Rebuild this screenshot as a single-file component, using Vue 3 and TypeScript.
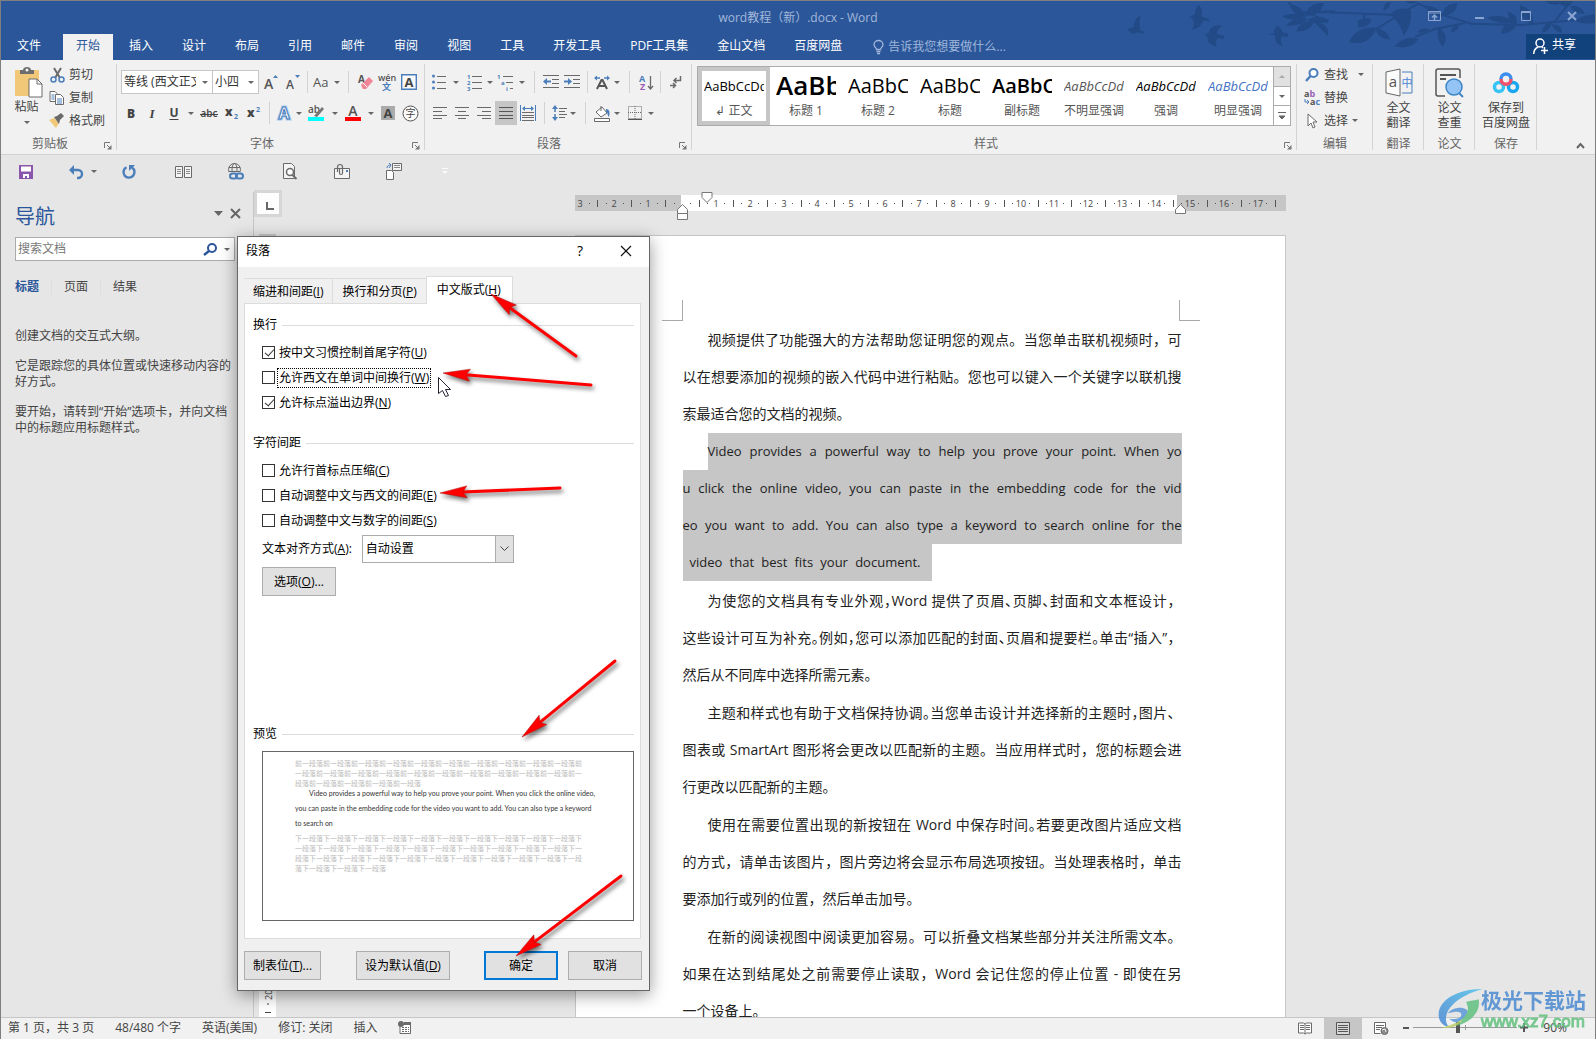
<script setup lang="ts">
import { ref } from 'vue'

interface Icon { w: number; h: number; body: string }
interface Tool { kind: 'btn' | 'arr' | 'sep'; icon?: string; label?: string; on?: boolean }
interface Line { t: string; tight?: boolean; end?: boolean }

const G = '#6a6a6a'
const B = '#4a7ebb'

const icons: Record<string, Icon> = {
  paste: { w: 28, h: 31, body: `<path d="M0 3h24v26H0z" fill="#f0c878"/><path d="M5 3h3c0-4 8-4 8 0h3v4H5z" fill="#6d6d6d"/><circle cx="12" cy="3" r="1.5" fill="#f0f0f0"/><path d="M14 12h8l5 5v13H14z" fill="#fff" stroke="#6d6d6d"/><path d="M22 12v5h5" fill="none" stroke="#6d6d6d"/>` },
  cut: { w: 15, h: 16, body: `<path d="M4 1l6 10M11 1L5 11" stroke="#6a6a6a" stroke-width="2" fill="none"/><circle cx="3.500" cy="12.500" r="2.500" fill="none" stroke="${B}" stroke-width="1.500"/><circle cx="11.500" cy="12.500" r="2.500" fill="none" stroke="${B}" stroke-width="1.500"/>` },
  copy: { w: 16, h: 14, body: `<path d="M1 .5h5l2 2v8H1z" fill="#fff" stroke="${G}"/><path d="M6.500 3.500h5l3 3v7h-8z" fill="#fff" stroke="${G}"/><path d="M8 8h5M8 10h5M8 12h5M2.500 4h3M2.500 6h3M2.500 8h3" stroke="${B}"/>` },
  brush: { w: 16, h: 15, body: `<path d="M0 7l5-2 5 5-3 5z" fill="#f0c878"/><path d="M5 4l3-1 4-3 3 3-4 4-1 4z" fill="#6a6a6a"/>` },
  grow: { w: 14, h: 16, body: `<text x="0" y="15" font-size="14" fill="#555" font-weight="600">A</text><path d="M9 4l2.500-3L14 4z" fill="${B}"/>` },
  shrink: { w: 14, h: 16, body: `<text x="0" y="15" font-size="12" fill="#555" font-weight="600">A</text><path d="M9 1l2.500 3L14 1z" fill="${B}"/>` },
  aa: { w: 18, h: 14, body: `<text x="0" y="12" font-size="13" fill="#555" font-weight="500">Aa</text>` },
  eraser: { w: 15, h: 16, body: `<text x="0" y="9" font-size="10" fill="#555" font-weight="700">A</text><path d="M3 11l8-8 4 4-7 8H5z" fill="#ef8595"/><path d="M5 9l4 4" stroke="#fff"/>` },
  wen: { w: 18, h: 17, body: `<text x="0" y="7" font-size="9" fill="#555" font-weight="600">wén</text><text x="4" y="16" font-size="9" fill="${B}" font-weight="700">文</text>` },
  boxa: { w: 16, h: 16, body: `<path d="M.7 .7h14.600v14.600H.7z" fill="#f8f8f8" stroke="${B}" stroke-width="1.400"/><text x="8" y="13" text-anchor="middle" font-size="13" fill="#444" font-weight="700">A</text>` },
  bold: { w: 10, h: 14, body: `<text x="5" y="12" text-anchor="middle" font-size="12" fill="#444" font-weight="800">B</text>` },
  italic: { w: 10, h: 14, body: `<text x="5" y="12" text-anchor="middle" font-size="13" fill="#444" font-style="italic" font-weight="700" font-family="Liberation Serif">I</text>` },
  under: { w: 12, h: 14, body: `<text x="6" y="11" text-anchor="middle" font-size="12" fill="#444" font-weight="700">U</text><path d="M1.500 13.500h9" stroke="#444"/>` },
  strike: { w: 18, h: 12, body: `<text x="9" y="10" text-anchor="middle" font-size="10" fill="#444" font-weight="600">abc</text><path d="M0 7.500h18" stroke="#444"/>` },
  sub: { w: 14, h: 14, body: `<text x="0" y="10" font-size="12" fill="#444" font-weight="800">x</text><text x="9" y="13" font-size="7" fill="${B}" font-weight="700">2</text>` },
  sup: { w: 14, h: 14, body: `<text x="0" y="11" font-size="12" fill="#444" font-weight="800">x</text><text x="9" y="6" font-size="7" fill="${B}" font-weight="700">2</text>` },
  effect: { w: 16, h: 16, body: `<text x="8" y="14" text-anchor="middle" font-size="16" fill="#fff" stroke="#a9cdf0" stroke-width="3" font-weight="700">A</text><text x="8" y="14" text-anchor="middle" font-size="16" fill="#fff" stroke="#3f77b8" font-weight="700">A</text>` },
  marker: { w: 18, h: 18, body: `<text x="0" y="9" font-size="10" fill="#555" font-weight="600">ab</text><path d="M6 12l8-9 2 2-7 8z" fill="#777"/><path d="M0 13h16v4H0z" fill="#00ffff"/>` },
  acolor: { w: 16, h: 18, body: `<text x="8" y="12" text-anchor="middle" font-size="14" fill="#555" font-weight="600">A</text><path d="M0 13h16v4H0z" fill="#ff0000"/>` },
  ashade: { w: 14, h: 14, body: `<path d="M0 0h14v14H0z" fill="#ababab"/><text x="7" y="12" text-anchor="middle" font-size="13" fill="#444" font-weight="700">A</text>` },
  circlez: { w: 17, h: 17, body: `<circle cx="8.500" cy="8.500" r="7.500" fill="#fafafa" stroke="#555"/><text x="8.500" y="12" text-anchor="middle" font-size="10" fill="#444">字</text>` },
  bullets: { w: 14, h: 16, body: `<g fill="${B}"><circle cx="1.500" cy="2" r="1.500"/><circle cx="1.500" cy="8" r="1.500"/><circle cx="1.500" cy="14" r="1.500"/></g><path d="M5 2.500h9M5 8.500h9M5 14.500h9" stroke="${G}"/>` },
  numbers: { w: 15, h: 17, body: `<g fill="${B}" font-size="6" font-weight="700"><text x="0" y="5">1</text><text x="0" y="11">2</text><text x="0" y="17">3</text></g><path d="M5 2.500h10M5 8.500h10M5 14.500h10" stroke="${G}"/>` },
  multi: { w: 18, h: 17, body: `<g fill="${B}" font-size="6" font-weight="700"><text x="0" y="5">1</text><text x="4" y="11">a</text><text x="9" y="17">i</text></g><path d="M6 2.500h10M9 8.500h7M13 14.500h3" stroke="${G}"/>` },
  outdent: { w: 17, h: 14, body: `<path d="M0 .5h16M9 4.500h7M9 8.500h7M0 12.500h16" stroke="${G}"/><path d="M8 6.500H3" stroke="${B}" stroke-width="2"/><path d="M0 6.500L4 3v7z" fill="${B}"/>` },
  indent: { w: 17, h: 14, body: `<path d="M0 .5h16M9 4.500h7M9 8.500h7M0 12.500h16" stroke="${G}"/><path d="M0 6.500h5" stroke="${B}" stroke-width="2"/><path d="M8 6.500L4 3v7z" fill="${B}"/>` },
  awide: { w: 16, h: 15, body: `<path d="M3 14L7.500 5h1L13 14M5 11h6" fill="none" stroke="#555" stroke-width="2"/><path d="M0 3L3 .5v5zM16 3L13 .5v5z" fill="${B}"/><path d="M2 3h4M10 3h4" stroke="${B}" stroke-width="1.500"/>` },
  sort: { w: 15, h: 17, body: `<text x="0" y="8" font-size="9" fill="${B}" font-weight="700">A</text><text x="1" y="16" font-size="9" fill="#9a5fb5" font-weight="700">Z</text><path d="M11.500 2v13M9 12l2.500 3 2.500-3" stroke="${G}" fill="none" stroke-width="1.300"/>` },
  marks: { w: 12, h: 14, body: `<path d="M10.500 1v4.500H4M6.500 3L4 5.500 6.500 8M0 10.500h5M3 8l2.500 2.500L3 13" stroke="${G}" fill="none" stroke-width="1.500"/>` },
  left: { w: 14, h: 12, body: `<path d="M0 .5h14M0 4.500h9M0 8.500h14M0 11.500h9" stroke="${G}"/>` },
  center: { w: 14, h: 12, body: `<path d="M0 .5h14M3 4.500h8M0 8.500h14M3 11.500h8" stroke="${G}"/>` },
  right: { w: 14, h: 12, body: `<path d="M0 .5h14M5 4.500h9M0 8.500h14M5 11.500h9" stroke="${G}"/>` },
  justify: { w: 14, h: 12, body: `<path d="M0 .5h14M0 4.500h14M0 8.500h14M0 11.500h14" stroke="#555"/>` },
  dist: { w: 16, h: 16, body: `<path d="M.5 0v16M15.500 0v16" stroke="${B}"/><path d="M2 3.500L5 1v5zM14 3.500L11 1v5z" fill="${B}"/><path d="M4 3.500h8" stroke="${B}"/><path d="M2 7.500h12M2 10.500h12M2 12.500h12M2 15.500h12" stroke="${G}"/>` },
  spacing: { w: 15, h: 16, body: `<path d="M3 2v5M3 9v5" stroke="${B}" stroke-width="1.500"/><path d="M0 4l3-4 3 4zM0 12l3 4 3-4z" fill="${B}"/><path d="M7 3.500h8M7 6.500h6M7 9.500h8M7 12.500h6" stroke="${G}"/>` },
  bucket: { w: 17, h: 17, body: `<path d="M2 7l6-5 5 6-6 4z" fill="#fff" stroke="${G}"/><path d="M7 6V1" stroke="${G}"/><path d="M12 4c4 0 4 4 3 8-2-2-1-5-3-5z" fill="${B}"/><path d="M.5 13.500h15v3H.5z" fill="#fff" stroke="${G}"/>` },
  borders: { w: 14, h: 14, body: `<path d="M.5 .5h13v12H.5zM7 0v13M0 6.500h14" fill="none" stroke="${G}" stroke-dasharray="1 1"/><path d="M0 13.500h14" stroke="#555"/>` },
  find: { w: 14, h: 14, body: `<circle cx="8.500" cy="5" r="4" fill="#fff" stroke="${B}" stroke-width="2"/><path d="M5.500 8L1 13" stroke="${B}" stroke-width="2.500"/>` },
  replace: { w: 17, h: 17, body: `<text x="0" y="8" font-size="9" font-weight="700" fill="#555">a<tspan fill="#9a5fb5">b</tspan></text><text x="6" y="16" font-size="9" font-weight="700" fill="#555">a<tspan fill="${B}">c</tspan></text><path d="M1 10v3h4M3 11l2 2-2 2" stroke="${B}" fill="none"/>` },
  select: { w: 12, h: 16, body: `<path d="M2 1v12l3-3 2 5 2-1-2-5h4z" fill="#fff" stroke="${G}"/>` },
  translate: { w: 28, h: 29, body: `<path d="M1 4l14-3v27L1 25z" fill="#fbfbfb" stroke="#666"/><text x="8" y="19" text-anchor="middle" font-size="15" fill="#555">a</text><path d="M17 4h10v21H17" fill="none" stroke="${B}"/><text x="22" y="19" text-anchor="middle" font-size="11" fill="#4a86d8">中</text>` },
  paper: { w: 29, h: 30, body: `<path d="M25 10V3q0-2-2-2H3Q1 1 1 3v23q0 2 2 2h7" fill="none" stroke="#555" stroke-width="1.500"/><path d="M5 7h16M5 11h6" stroke="#555" stroke-width="2"/><circle cx="19" cy="19" r="8" fill="#93c4f5" stroke="#3f86c6" stroke-width="1.500"/><path d="M24 25l4 4" stroke="#3f86c6" stroke-width="2"/>` },
  netdisk: { w: 26, h: 22, body: `<circle cx="6" cy="15" r="4.500" fill="none" stroke="#36c3f5" stroke-width="3.500"/><circle cx="20" cy="15" r="4.500" fill="none" stroke="#17a6ef" stroke-width="3.500"/><path d="M8 7a5 5 0 0 1 10 0" fill="none" stroke="#3b8df0" stroke-width="3.500"/><path d="M8 7c0 7 10 7 10 0" fill="none" stroke="#f2506b" stroke-width="3.500"/>` },
  save: { w: 14, h: 14, body: `<path d="M0 0h14v14H0z" fill="#8a55ab"/><path d="M2 1.500h10v5H2zM4 9h6v4H8v-2H6v2H4z" fill="#fff"/>` },
  undo: { w: 15, h: 14, body: `<path d="M2 5h7a4 4 0 0 1 0 8H8" fill="none" stroke="${B}" stroke-width="2.400"/><path d="M0 5l5-5v10z" fill="${B}"/>` },
  redo: { w: 14, h: 14, body: `<path d="M4.500 2.200A5.500 5.500 0 1 0 10 2.500" fill="none" stroke="${B}" stroke-width="2.400"/><path d="M7 0h6L7 6z" fill="${B}"/>` },
  columns: { w: 17, h: 12, body: `<path d="M.5 .5h7v11h-7zM9.500 .5h7v11h-7z" fill="#f4f4f4" stroke="${G}"/><path d="M2 3.500h4M2 5.500h4M2 7.500h4M11 3.500h4M11 5.500h4M11 7.500h4" stroke="#888"/>` },
  globe: { w: 16, h: 17, body: `<g fill="none" stroke="${G}"><circle cx="6.500" cy="6.500" r="6"/><ellipse cx="6.500" cy="6.500" rx="2.500" ry="6"/><path d="M1 4.500h11M1 8.500h11"/></g><path d="M1 9h15v8H1z" fill="#e6e6e6"/><rect x="2" y="10.500" width="7" height="5" rx="2.500" fill="none" stroke="${B}" stroke-width="2"/><rect x="8" y="10.500" width="7" height="5" rx="2.500" fill="none" stroke="${B}" stroke-width="2"/>` },
  preview: { w: 14, h: 17, body: `<path d="M.5 .5h8l3 3v12H.5z" fill="#f4f4f4" stroke="${G}"/><circle cx="7" cy="9" r="3.500" fill="#fff" stroke="${G}" stroke-width="1.500"/><path d="M9.500 12l4 4" stroke="${G}" stroke-width="2"/>` },
  attach: { w: 17, h: 16, body: `<path d="M.5 4.500h15v10H.5z" fill="#f4f4f4" stroke="${G}"/><path d="M12 6h2v2h-2z" fill="${B}"/><path d="M3.500 8V3a2.500 2.500 0 0 1 5 0v6a1.500 1.500 0 0 1-3 0V4" fill="none" stroke="${G}" stroke-width="1.200"/>` },
  transfer: { w: 16, h: 17, body: `<path d="M6.500 .5h9v7h-9z" fill="#f4f4f4" stroke="${G}"/><path d="M8 2.500h6M8 4.500h6" stroke="#888"/><path d="M.5 7.500h5l2 2v7h-7z" fill="#fff" stroke="${G}"/><path d="M1 5c0-3 3-3 4-3M3 0l2 2-2 3" fill="none" stroke="${B}"/>` },
  readview: { w: 14, h: 13, body: `<path d="M.5 1h5l1.500 1 1.500-1h5v10h-5L7 12l-1.500-1h-5zM7 2v10" fill="#fff" stroke="${G}"/><path d="M2 3.500h4M2 5.500h4M2 7.500h4M8 3.500h4M8 5.500h4M8 7.500h4" stroke="${G}"/>` },
  printview: { w: 14, h: 13, body: `<path d="M.5 .5h13v12H.5z" fill="#d8d8d8" stroke="#555"/><path d="M2 3.500h10M2 5.500h10M2 7.500h10M2 9.500h10" stroke="#555"/>` },
  webview: { w: 15, h: 13, body: `<path d="M11.500 5V.5H.5v11h6" fill="#fff" stroke="${G}"/><path d="M2 3.500h8M2 5.500h6M2 7.500h4" stroke="${G}"/><circle cx="10.500" cy="9" r="3.500" fill="#8a8a8a" stroke="${G}"/><path d="M8 8l3-1 1 3" stroke="#eee" fill="none"/>` },
  macro: { w: 13, h: 13, body: `<path d="M2 3.500h10.500v9H2z" fill="#fff" stroke="${G}"/><path d="M6 1h7v3H6z" fill="${G}"/><circle cx="3" cy="3" r="3" fill="${G}"/><path d="M4 6.500h7M4 8.500h7M4 10.500h7" stroke="${G}" stroke-dasharray="2 1"/>` },
  launch: { w: 8, h: 8, body: `<path d="M.5 6V.5H6" fill="none" stroke="#777"/><path d="M3 3l3 3" stroke="#777"/><path d="M7.500 3v4.500H3z" fill="#777"/>` },
  arrow: { w: 6, h: 3, body: `<path d="M0 0h6L3 3z" fill="#666"/>` },
  person: { w: 15, h: 17, body: `<circle cx="7" cy="5" r="4" fill="none" stroke="#fff" stroke-width="1.500"/><path d="M.7 16c0-4 2-6 4.500-7M9 9l1 1" fill="none" stroke="#fff" stroke-width="1.500"/><path d="M11.500 9v7M8 12.500h7" stroke="#fff" stroke-width="1.500"/>` },
  bulb: { w: 11, h: 14, body: `<path d="M3.500 9.500C3.500 8 1 7 1 4.500a4.500 4 0 0 1 9 0C10 7 7.500 8 7.500 9.500zM3.500 11.500h4M4 13.500h3" fill="none" stroke="#9fb6da" stroke-width="1.300"/>` },
  ribbonopt: { w: 13, h: 10, body: `<path d="M.5 .5h12v9H.5zM0 2h13" fill="none" stroke="#8aa5cf"/><path d="M6.500 9V4M4 6.500L6.500 4 9 6.500" fill="none" stroke="#8aa5cf" stroke-width="1.500"/>` },
  minimize: { w: 10, h: 10, body: `<path d="M0 7h9" stroke="#8aa5cf" stroke-width="2"/>` },
  maximize: { w: 10, h: 10, body: `<path d="M.5 .5h9v9h-9zM0 1.500h10" fill="none" stroke="#8aa5cf"/>` },
  close: { w: 10, h: 10, body: `<path d="M1 1l8 8M9 1L1 9" stroke="#8aa5cf" stroke-width="2"/>` },
}

const menuTabs = ['文件', '开始', '插入', '设计', '布局', '引用', '邮件', '审阅', '视图', '工具', '开发工具', 'PDF工具集', '金山文档', '百度网盘']
const winButtons = [
  { icon: 'ribbonopt', label: '功能区显示选项' },
  { icon: 'minimize', label: '最小化' },
  { icon: 'maximize', label: '最大化' },
  { icon: 'close', label: '关闭' },
]

const btn = (icon: string, label: string, on = false): Tool => ({ kind: 'btn', icon, label, on })
const arr: Tool = { kind: 'arr' }
const sep: Tool = { kind: 'sep' }

const fontRow1 = [btn('grow', '增大字号'), btn('shrink', '减小字号'), sep, btn('aa', '更改大小写'), arr, sep, btn('eraser', '清除格式'), btn('wen', '拼音指南'), btn('boxa', '字符边框')]
const fontRow2 = [btn('bold', '加粗'), btn('italic', '倾斜'), btn('under', '下划线'), arr, btn('strike', '删除线'), btn('sub', '下标'), btn('sup', '上标'), sep, btn('effect', '文本效果'), arr, btn('marker', '突出显示'), arr, btn('acolor', '字体颜色'), arr, btn('ashade', '字符底纹'), btn('circlez', '带圈字符')]
const paraRow1 = [btn('bullets', '项目符号'), arr, btn('numbers', '编号'), arr, btn('multi', '多级列表'), arr, sep, btn('outdent', '减少缩进'), btn('indent', '增加缩进'), sep, btn('awide', '中文版式'), arr, sep, btn('sort', '排序'), sep, btn('marks', '显示编辑标记')]
const paraRow2 = [btn('left', '左对齐'), btn('center', '居中'), btn('right', '右对齐'), btn('justify', '两端对齐', true), btn('dist', '分散对齐'), sep, btn('spacing', '行距'), arr, sep, btn('bucket', '底纹'), arr, btn('borders', '边框'), arr]
const quick = [btn('save', '保存'), btn('undo', '撤消'), arr, btn('redo', '重复'), btn('columns', '多页'), btn('globe', '超链接'), btn('preview', '打印预览'), btn('attach', '附件'), btn('transfer', '导出')]

const clipboard = [
  { icon: 'cut', label: '剪切' },
  { icon: 'copy', label: '复制' },
  { icon: 'brush', label: '格式刷' },
]
const editing = [
  { icon: 'find', label: '查找', arrow: 'far' },
  { icon: 'replace', label: '替换', arrow: '' },
  { icon: 'select', label: '选择', arrow: 'near' },
]
const styles = [
  { sample: 'AaBbCcDd', name: '↲ 正文', look: 'body' },
  { sample: 'AaBb', name: '标题 1', look: 'h1' },
  { sample: 'AaBbC', name: '标题 2', look: 'h2' },
  { sample: 'AaBbC', name: '标题', look: 'h2' },
  { sample: 'AaBbC', name: '副标题', look: 'h2 heavy' },
  { sample: 'AaBbCcDd', name: '不明显强调', look: 'body slant grey' },
  { sample: 'AaBbCcDd', name: '强调', look: 'body slant' },
  { sample: 'AaBbCcDd', name: '明显强调', look: 'body slant blue' },
]
const bigTools = [
  { icon: 'translate', lines: ['全文', '翻译'], group: '翻译', size: 'n1' },
  { icon: 'paper', lines: ['论文', '查重'], group: '论文', size: 'n1' },
  { icon: 'netdisk', lines: ['保存到', '百度网盘'], group: '保存', size: 'n2' },
]

/* A4 page: 21 cm of ruler over the page width, margins at 3.2 cm */
const pageWidth = 711
const cm = (n: number) => Math.round(107 + (n * pageWidth) / 21)
const numbers = [-3, -2, -1, ...Array.from({ length: 17 }, (_, i) => i + 1)]
const halves = Array.from({ length: 21 }, (_, i) => i - 3 + 0.5)
const quarters = Array.from({ length: 41 }, (_, i) => -2.75 + i / 2)

const selection: Line[] = [
  { t: 'Video provides a powerful way to help you prove your point. When yo' },
  { t: 'u click the online video, you can paste in the embedding code for the vid' },
  { t: 'eo you want to add. You can also type a keyword to search online for the' },
  { t: 'video that best fits your document.' },
]
const before: Line[][] = [[
  { t: '视频提供了功能强大的方法帮助您证明您的观点。当您单击联机视频时，可' },
  { t: '以在想要添加的视频的嵌入代码中进行粘贴。您也可以键入一个关键字以联机搜' },
  { t: '索最适合您的文档的视频。', end: true },
]]
const after: Line[][] = [
  [
    { t: '为使您的文档具有专业外观，Word 提供了页眉、页脚、封面和文本框设计，', tight: true },
    { t: '这些设计可互为补充。例如，您可以添加匹配的封面、页眉和提要栏。单击“插入”，', tight: true },
    { t: '然后从不同库中选择所需元素。', end: true },
  ],
  [
    { t: '主题和样式也有助于文档保持协调。当您单击设计并选择新的主题时，图片、', tight: true },
    { t: '图表或 SmartArt 图形将会更改以匹配新的主题。当应用样式时，您的标题会进' },
    { t: '行更改以匹配新的主题。', end: true },
  ],
  [
    { t: '使用在需要位置出现的新按钮在 Word 中保存时间。若要更改图片适应文档', tight: true },
    { t: '的方式，请单击该图片，图片旁边将会显示布局选项按钮。当处理表格时，单击' },
    { t: '要添加行或列的位置，然后单击加号。', end: true },
  ],
  [
    { t: '在新的阅读视图中阅读更加容易。可以折叠文档某些部分并关注所需文本。' },
    { t: '如果在达到结尾处之前需要停止读取，Word 会记住您的停止位置 - 即使在另' },
    { t: '一个设备上。', end: true },
  ],
]

const dialogTabs = [
  { text: '缩进和间距', key: 'I' },
  { text: '换行和分页', key: 'P' },
  { text: '中文版式', key: 'H' },
]
const activeTab = ref(2)
const breakOptions = ref([
  { text: '按中文习惯控制首尾字符', key: 'U', on: true, focus: false },
  { text: '允许西文在单词中间换行', key: 'W', on: false, focus: true },
  { text: '允许标点溢出边界', key: 'N', on: true, focus: false },
])
const spaceOptions = ref([
  { text: '允许行首标点压缩', key: 'C', on: false },
  { text: '自动调整中文与西文的间距', key: 'E', on: false },
  { text: '自动调整中文与数字的间距', key: 'S', on: false },
])
const previewPrev = '前一段落'.repeat(25)
const previewNext = '下一段落'.repeat(34)
const previewBody = [
  'Video provides a powerful way to help you prove your point. When you click the online video,',
  'you can paste in the embedding code for the video you want to add. You can also type a keyword',
  'to search on',
]

/* annotation arrows: tip and tail points */
const pointers = [
  [491, 294, 576, 356],
  [443, 373, 591, 385],
  [440, 493, 560, 488],
  [522, 737, 615, 661],
  [516, 956, 621, 876],
].map(([x, y, tx, ty]) => ({
  move: `translate(${x} ${y}) rotate(${(Math.atan2(ty - y, tx - x) * 180) / Math.PI})`,
  length: Math.hypot(tx - x, ty - y),
}))
</script>

<template>
  <div class="window">
    <header class="titlebar">
      <svg class="decor" viewBox="0 0 1440 180" aria-hidden="true">
        <g fill="#224a87">
          <path d="M38 84l18-6c2-18 8-30 20-34-2 16-4 28 0 44l12 4-4 6-18-4c-10 8-20 4-28-10z" />
          <path d="M222 48l18-8c0-14 4-24 12-28 12 14 10 26 8 34l20 8 6 8-22-4c-6 18-14 26-34 28 10-14 8-24 2-34z" />
          <path d="M268 98l14-2c0-16 14-24 40-22-12 8-16 16-16 24l22 8-2 8-18-2c-8 8-6 16-2 26-20-6-28-14-28-28z" />
          <path d="M460 100l18-4c-2-10 2-18 10-22 10 6 14 12 14 20l18 4-2 10-18-2c-4 10-2 20 4 30-18-6-26-16-24-34z" />
          <path d="M500 46q34-16 70 0-24 22-70 0zM512 74q22-26 66-22-14 24-66 22zM524 10q40 4 48 40-42-8-48-40zM570 44q10-40 56-38-8 40-56 38zM576 56q34-18 68 2-34 20-68-2zM544 92q10-36 56-32-16 32-56 32zM600 66q46 0 38 40-14-16-38-40z" />
          <path d="M702 124q22-50 82-44-18 56-82 44zM784 82q34 6 42 34-44-4-42-34zM728 60q22-14 42-4-10 26-42 22zM826 40q30-30 62-10 4 40-22 76-4-30-40-66zM806 30q-4-24 20-28 4 16-20 28zM868 0h40q-14 16-40 0z" />
          <path d="M838 136q34-36 72-22-20 34-72 22zM970 80q36 20 14 58-24-24-14-58zM906 94q10-16 38-10-14 14-38 10zM1008 94q2-24 24-22-2 20-24 22zM930 14q44 0 54 34-40 0-54-34zM982 46q0-34 44-40 0 34-44 40z" />
          <path d="M1114 50q44-16 88 14-46 10-88-14zM1158 98q4-36 44-30 0 26-44 30zM1178 32q34 6 26 40-26-14-26-40zM1214 12q44 12 40 60-40-18-40-60zM1282 96q0-30 28-32-2 26-28 32zM1310 68q36 4 30 28-24-4-30-28zM1290 0h84q-16 30-40 8-18 10-44-8zM1366 14q30-4 44 24-38 2-44-24zM1380 60q20-18 60-20v26q-30 6-60-6z" />
        </g>
        <path d="M520 4l30 30 80 0 220 8 60-34 80 36 80 24 150 4 220-20M740 70l10-30M640 64l-60-30 80-4M900 108l60-24 90-18M784 84l80-50M1320 60l40-50" fill="none" stroke="#224a87" stroke-width="6" />
      </svg>
      <h1 class="title">word教程（新）.docx - Word</h1>
      <div class="winbtns">
        <button v-for="w in winButtons" :key="w.icon" :aria-label="w.label">
          <svg :width="icons[w.icon].w" :height="icons[w.icon].h" v-html="icons[w.icon].body" />
        </button>
      </div>
    </header>

    <nav class="menubar">
      <button v-for="(m, i) in menuTabs" :key="m" :class="{ active: i === 1, first: i === 0 }">{{ m }}</button>
      <label class="tell">
        <svg width="11" height="14" v-html="icons.bulb.body" />
        <input type="text" placeholder="告诉我您想要做什么..." aria-label="告诉我您想要做什么" />
      </label>
      <button class="share"><svg width="15" height="17" v-html="icons.person.body" />共享</button>
    </nav>

    <section class="ribbon">
      <div class="group clip">
        <div class="clipbody">
          <button class="paste">
            <svg width="28" height="31" v-html="icons.paste.body" />
            <span>粘贴</span>
            <svg width="6" height="3" v-html="icons.arrow.body" />
          </button>
          <div class="smalls">
            <button v-for="c in clipboard" :key="c.icon" class="small">
              <span class="slot"><svg :width="icons[c.icon].w" :height="icons[c.icon].h" v-html="icons[c.icon].body" /></span>
              {{ c.label }}
            </button>
          </div>
        </div>
        <div class="caption">剪贴板<button class="launch" aria-label="剪贴板设置"><svg width="8" height="8" v-html="icons.launch.body" /></button></div>
      </div>

      <div class="group font">
        <div class="toolrow f1">
          <span class="combo"><select aria-label="字体"><option>等线 (西文正文)</option></select><svg width="6" height="3" v-html="icons.arrow.body" /></span>
          <span class="combo size"><select aria-label="字号"><option>小四</option></select><svg width="6" height="3" v-html="icons.arrow.body" /></span>
          <template v-for="(t, i) in fontRow1" :key="i">
            <i v-if="t.kind === 'sep'" class="sep" />
            <button v-else class="tool" :aria-label="t.label ?? '更多'">
              <svg :width="icons[t.icon ?? 'arrow'].w" :height="icons[t.icon ?? 'arrow'].h" v-html="icons[t.icon ?? 'arrow'].body" />
            </button>
          </template>
        </div>
        <div class="toolrow f2">
          <template v-for="(t, i) in fontRow2" :key="i">
            <i v-if="t.kind === 'sep'" class="sep" />
            <button v-else class="tool" :aria-label="t.label ?? '更多'">
              <svg :width="icons[t.icon ?? 'arrow'].w" :height="icons[t.icon ?? 'arrow'].h" v-html="icons[t.icon ?? 'arrow'].body" />
            </button>
          </template>
        </div>
        <div class="caption">字体<button class="launch" aria-label="字体设置"><svg width="8" height="8" v-html="icons.launch.body" /></button></div>
      </div>

      <div class="group para">
        <div class="toolrow p1">
          <template v-for="(t, i) in paraRow1" :key="i">
            <i v-if="t.kind === 'sep'" class="sep" />
            <button v-else class="tool" :aria-label="t.label ?? '更多'">
              <svg :width="icons[t.icon ?? 'arrow'].w" :height="icons[t.icon ?? 'arrow'].h" v-html="icons[t.icon ?? 'arrow'].body" />
            </button>
          </template>
        </div>
        <div class="toolrow p2">
          <template v-for="(t, i) in paraRow2" :key="i">
            <i v-if="t.kind === 'sep'" class="sep" />
            <button v-else class="tool" :class="{ on: t.on }" :aria-label="t.label ?? '更多'">
              <svg :width="icons[t.icon ?? 'arrow'].w" :height="icons[t.icon ?? 'arrow'].h" v-html="icons[t.icon ?? 'arrow'].body" />
            </button>
          </template>
        </div>
        <div class="caption">段落<button class="launch" aria-label="段落设置"><svg width="8" height="8" v-html="icons.launch.body" /></button></div>
      </div>

      <div class="group stylegroup">
        <div class="gallery">
          <button v-for="(s, i) in styles" :key="s.name" class="style" :class="{ current: i === 0 }">
            <span class="sample" :class="s.look">{{ s.sample }}</span>
            <span class="stylename">{{ s.name }}</span>
          </button>
          <div class="scroller">
            <button class="off" aria-label="上一行"><svg width="6" height="3"><path d="M0 3h6L3 0z" fill="#aaa" /></svg></button>
            <button aria-label="下一行"><svg width="6" height="3" v-html="icons.arrow.body" /></button>
            <button aria-label="其他"><svg width="8" height="8"><path d="M0 .5h8M1 4h6L4 7z" fill="#666" stroke="#666" /></svg></button>
          </div>
        </div>
        <div class="caption">样式<button class="launch" aria-label="样式设置"><svg width="8" height="8" v-html="icons.launch.body" /></button></div>
      </div>

      <div class="group edit">
        <div class="smalls">
          <button v-for="c in editing" :key="c.icon" class="small">
            <span class="slot"><svg :width="icons[c.icon].w" :height="icons[c.icon].h" v-html="icons[c.icon].body" /></span>
            {{ c.label }}
            <svg v-if="c.arrow" :class="c.arrow" width="6" height="3" v-html="icons.arrow.body" />
          </button>
        </div>
        <div class="caption">编辑</div>
      </div>

      <div v-for="b in bigTools" :key="b.icon" class="group" :class="b.size">
        <button class="big">
          <span class="bigicon"><svg :width="icons[b.icon].w" :height="icons[b.icon].h" v-html="icons[b.icon].body" /></span>
          <span v-for="l in b.lines" :key="l">{{ l }}</span>
        </button>
        <div class="caption">{{ b.group }}</div>
      </div>
      <button class="collapse" aria-label="折叠功能区"><svg width="9" height="6"><path d="M1 5l3.500-4L8 5" fill="none" stroke="#666" stroke-width="2" /></svg></button>
    </section>

    <section class="quick">
      <button v-for="(t, i) in quick" :key="i" class="tool" :aria-label="t.label ?? '更多'">
        <svg :width="icons[t.icon ?? 'arrow'].w" :height="icons[t.icon ?? 'arrow'].h" v-html="icons[t.icon ?? 'arrow'].body" />
      </button>
      <button class="tool" aria-label="自定义"><svg width="6" height="7"><path d="M0 .5h6" stroke="#fafafa" /><path d="M0 3h6L3 6z" fill="#fafafa" /></svg></button>
    </section>

    <main class="workspace">
      <aside class="nav">
        <div class="navhead">
          <h2>导航</h2>
          <button aria-label="任务窗格选项"><svg width="9" height="5"><path d="M0 0h9L4.500 5z" fill="#666" /></svg></button>
          <button aria-label="关闭"><svg width="11" height="11"><path d="M1 1l9 9M10 1l-9 9" stroke="#666" stroke-width="2" /></svg></button>
        </div>
        <div class="search">
          <input type="text" placeholder="搜索文档" aria-label="搜索文档" />
          <svg width="14" height="13"><circle cx="9" cy="5" r="4" fill="none" stroke="#2b579a" stroke-width="2" /><path d="M6 8l-5 4" stroke="#2b579a" stroke-width="2.500" /></svg>
          <svg width="6" height="3" v-html="icons.arrow.body" />
        </div>
        <div class="navtabs">
          <button class="active">标题</button>
          <button>页面</button>
          <button>结果</button>
        </div>
        <p>创建文档的交互式大纲。</p>
        <p>它是跟踪您的具体位置或快速移动内容的好方式。</p>
        <p>要开始，请转到“开始”选项卡，并向文档中的标题应用标题样式。</p>
      </aside>

      <div class="left">
        <button class="corner" aria-label="制表符"><svg width="8" height="8"><path d="M1 0v7h7" fill="none" stroke="#666" stroke-width="2" /></svg></button>
        <div class="vruler"><svg width="17" height="30"><text transform="translate(13 13) rotate(-90)" font-size="9" fill="#444">20</text><path d="M8 17h2M6 25.500h6" stroke="#444" /></svg></div>
      </div>

      <div class="canvas">
        <div class="ruler">
          <svg :width="pageWidth" height="32" :viewBox="`0 0 ${pageWidth} 32`">
            <path d="M0 5h711v16H0z" fill="#fff" />
            <path d="M0 5h106v16H0zM602 5h109v16H602z" fill="#c6c6c6" />
            <text v-for="n in numbers" :key="n" :x="cm(n)" y="17" text-anchor="middle" font-size="9" fill="#444">{{ Math.abs(n) }}</text>
            <path v-for="h in halves" :key="'h' + h" :d="`M${cm(h) + 0.5} 10v7`" stroke="#555" />
            <path v-for="q in quarters" :key="'q' + q" :d="`M${cm(q)} 13.500h1`" stroke="#555" />
            <g fill="#fff" stroke="#777">
              <path d="M127 2.500h10v5l-5 5-5-5z" />
              <path d="M102.500 23.500v-4l5-5 5 5v4zM102.500 23.500h10v6h-10z" />
              <path d="M600.500 23.500v-4l5-5 5 5v4z" />
            </g>
          </svg>
        </div>
        <article class="page">
          <div class="marks"><i /><i /></div>
          <section v-for="(p, i) in before" :key="'b' + i" class="block">
            <p v-for="l in p" :key="l.t" :class="{ end: l.end }"><span>{{ l.t }}</span></p>
          </section>
          <section class="block english">
            <p v-for="l in selection" :key="l.t"><span>{{ l.t }}</span></p>
          </section>
          <section v-for="(p, i) in after" :key="'a' + i" class="block">
            <p v-for="l in p" :key="l.t" :class="{ end: l.end }"><span :class="{ tight: l.tight }">{{ l.t.slice(0, -1) }}</span><span>{{ l.t.slice(-1) }}</span></p>
          </section>
        </article>
      </div>
    </main>

    <footer class="status">
      <span>第 1 页，共 3 页</span>
      <span>48/480 个字</span>
      <span>英语(美国)</span>
      <span>修订: 关闭</span>
      <span>插入</span>
      <svg width="13" height="13" v-html="icons.macro.body" />
      <div class="views">
        <button aria-label="阅读视图"><svg width="14" height="13" v-html="icons.readview.body" /></button>
        <button class="on" aria-label="页面视图"><svg width="14" height="13" v-html="icons.printview.body" /></button>
        <button aria-label="Web 版式视图"><svg width="15" height="13" v-html="icons.webview.body" /></button>
      </div>
      <button class="zoombtn" aria-label="缩小"><svg width="7" height="8"><path d="M0 4h6" stroke="#555" stroke-width="2" /></svg></button>
      <input class="zoom" type="range" min="0" max="100" value="43" aria-label="显示比例" />
      <button class="zoombtn" aria-label="放大"><svg width="9" height="9"><path d="M0 4.500h8M4 0v9" stroke="#555" stroke-width="2" /></svg></button>
      <span class="percent">90%</span>
    </footer>

    <section class="dialog" role="dialog" aria-label="段落">
      <header>
        <h2>段落</h2>
        <button aria-label="帮助">?</button>
        <button aria-label="关闭"><svg width="12" height="12"><path d="M1 1l10 10M11 1L1 11" stroke="#111" stroke-width="1.200" /></svg></button>
      </header>
      <div class="dbody">
        <div class="dtabs" role="tablist">
          <button v-for="(t, i) in dialogTabs" :key="t.key" role="tab" :class="{ active: i === activeTab }" @click="activeTab = i">{{ t.text }}(<u>{{ t.key }}</u>)</button>
        </div>
        <div class="panel">
          <fieldset>
            <legend>换行</legend>
            <label v-for="o in breakOptions" :key="o.key" class="check"><input v-model="o.on" type="checkbox" /><span :class="{ focus: o.focus }">{{ o.text }}(<u>{{ o.key }}</u>)</span></label>
          </fieldset>
          <fieldset class="spacing">
            <legend>字符间距</legend>
            <label v-for="o in spaceOptions" :key="o.key" class="check"><input v-model="o.on" type="checkbox" /><span>{{ o.text }}(<u>{{ o.key }}</u>)</span></label>
            <div class="align">
              <label for="align">文本对齐方式(<u>A</u>):</label>
              <span class="drop">
                <select id="align"><option>自动设置</option></select>
                <i><svg width="9" height="6"><path d="M.5 .5l4 4 4-4" fill="none" stroke="#444" /></svg></i>
              </span>
            </div>
            <button class="dbtn options">选项(<u>O</u>)...</button>
          </fieldset>
          <fieldset class="previewset">
            <legend>预览</legend>
            <div class="previewbox">
              <p class="faint">{{ previewPrev }}</p>
              <div class="mini"><p v-for="l in previewBody" :key="l">{{ l }}</p></div>
              <p class="faint">{{ previewNext }}</p>
            </div>
          </fieldset>
        </div>
        <div class="actions">
          <button class="dbtn tabstop">制表位(<u>T</u>)...</button>
          <button class="dbtn default">设为默认值(<u>D</u>)</button>
          <button class="dbtn ok">确定</button>
          <button class="dbtn">取消</button>
        </div>
      </div>
    </section>

    <svg class="overlay" aria-hidden="true">
      <g v-for="(p, i) in pointers" :key="i" class="pointer">
        <g :transform="p.move">
          <path :d="`M22 0H${p.length}`" stroke="#f00" stroke-width="3" stroke-linecap="round" />
          <path d="M0 0L27-6 23 0 27 6z" fill="#f00" stroke="#b01010" stroke-width=".5" />
        </g>
      </g>
      <path d="M438.500 377.500v16l4-3 3 6 3-1-3-6h5z" fill="#fff" stroke="#223" />
    </svg>

    <div class="brand">
      <svg width="46" height="42" viewBox="0 0 138 126">
        <defs><linearGradient id="swirl" x1="0" y1="1" x2="1" y2="0"><stop offset="0" stop-color="#4a86d4" /><stop offset="1" stop-color="#4fc3ea" /></linearGradient></defs>
        <path d="M134 3C60 2 0 36 2 82c1 20 14 32 30 35C18 98 22 72 44 50 66 28 100 12 134 3z" fill="url(#swirl)" />
        <path d="M30 76c12-20 62-26 62 4 0 22-42 32-58 12 20 4 36-2 36-12 0-12-20-10-40-4z" fill="#5b98d8" />
        <path d="M84 42c14-4 28-4 38-8 8 46-36 84-112 86C60 108 106 82 84 42z" fill="#62c07f" />
        <path d="M10 120c20-6 50-14 64-26-8 18-36 28-64 26z" fill="#c8cf6a" />
      </svg>
      <div><b>极光下载站</b><span>www.xz7.com</span></div>
    </div>
  </div>
</template>

<style>
html, body { margin: 0; height: 100%; }
</style>

<style scoped>
* { box-sizing: border-box; }
.window { position: relative; display: flex; flex-direction: column; height: 100vh; overflow: hidden; border: 1px solid #7f7f7f; border-bottom: 0; background: #e6e6e6; color: #444; font: 12px/16px "Open Sans", "Noto Sans CJK SC", sans-serif; }
button { padding: 0; border: 0; background: none; color: inherit; font: inherit; }
input, select { font: inherit; color: inherit; border-radius: 0; outline: 0; }
select { appearance: none; }
svg { display: block; flex: none; overflow: visible; }
h1, h2, p { margin: 0; font-weight: 400; }

.titlebar { position: relative; flex: none; height: 33px; background: #2b579a; }
.decor { position: absolute; z-index: 1; right: 0; top: 0; width: 480px; height: 60px; pointer-events: none; }
.title { text-align: center; font-size: 12px; line-height: 33px; color: #a3b8da; }
.winbtns { position: absolute; z-index: 2; right: 0; top: 0; display: flex; }
.winbtns button { display: flex; align-items: center; justify-content: center; width: 46px; height: 30px; }
.menubar { display: flex; flex: none; gap: 3px; height: 26px; background: #2b579a; color: #fff; }
.menubar > button { padding: 0 13px 2px; white-space: nowrap; line-height: 24px; }
.menubar > .first { padding-left: 16px; padding-right: 19px; }
.menubar > .active { background: #f1f1f1; color: #2b579a; }
.tell { display: flex; flex: 1; align-items: center; gap: 4px; padding: 0 0 0 15px; }
.tell input { width: 140px; border: 0; padding: 0; background: none; }
.tell input::placeholder { color: #9fb6da; }
.menubar > .share { z-index: 2; display: flex; align-items: flex-start; gap: 4px; width: 69px; padding: 4px 0 0 7px; margin-bottom: 1px; background: #12427c; line-height: 13px; }

.ribbon { display: flex; flex: none; height: 95px; background: #f1f1f1; border-bottom: 1px solid #d2d2d2; }
.group { position: relative; display: flex; flex: none; flex-direction: column; padding-top: 10px; }
.group::after { content: ""; position: absolute; right: 0; top: 4px; bottom: 4px; width: 1px; background: #d4d4d4; }
.caption { position: relative; margin-top: auto; height: 20px; text-align: center; line-height: 19px; color: #666; }
.launch { position: absolute; right: 5px; top: 8px; }
.clip { width: 116px; padding-top: 3px; }
.clip .caption { padding-right: 18px; }
.font { width: 308px; padding-left: 4px; }
.font .caption, .para .caption { padding-right: 22px; }
.para { width: 267px; padding-left: 3px; }
.stylegroup { width: 605px; padding: 6px 6px 0 5px; }
.stylegroup .caption { margin-right: -6px; padding-right: 22px; }
.edit { width: 76px; padding-top: 3px; }
.n1 { width: 51px; padding-top: 8px; }
.n2 { width: 62px; padding-top: 8px; }
.clipbody { display: flex; }
.paste { display: flex; flex-direction: column; align-items: center; width: 48px; padding: 4px 0 0 3px; }
.paste span { margin: 1px 0 6px; }
.paste > svg:first-child { margin-left: 4px; }
.smalls { display: flex; flex-direction: column; }
.small { display: flex; align-items: center; gap: 4px; height: 23px; white-space: nowrap; }
.edit .small { padding-left: 7px; }
.slot { display: flex; justify-content: center; width: 16px; }
.far { margin-left: 6px; }
.toolrow { display: grid; height: 24px; margin-bottom: 7px; }
.f1 { grid-template-columns: 92px 46px 24px 20px 8px 21px 10px 12px 22px 22px 22px; }
.f2 { grid-template-columns: 20px 22px 22px 12px 24px 22px 22px 9px 20px 10px 26px 10px 26px 9px 25px 20px; }
.p1 { grid-template-columns: 22px 12px 24px 8px 24px 8px 16px 18px 24px 6px 24px 6px 18px 16px 12px 20px; }
.p2 { grid-template-columns: 23px 22px 22px 22px 22px 10px 20px 8px 16px 18px 12px 23px 10px; }
.tool { display: flex; align-items: center; justify-content: center; min-width: 0; }
.tool.on { background: #c6c6c6; }
.sep { justify-self: center; width: 1px; margin: 1px 0; background: #d2d2d2; }
.combo { position: relative; display: flex; align-items: center; background: #fff; border: 1px solid #c6c6c6; color: #333; }
.combo.size { border-left: 0; }
.combo select { width: 100%; height: 22px; padding: 0 16px 0 2px; border: 0; background: none; }
.combo svg { position: absolute; right: 4px; }
.gallery { display: flex; height: 60px; border: 1px solid #ababab; background: #fff; }
.style { display: flex; flex: none; flex-direction: column; align-items: center; width: 72px; border: 4px solid transparent; border-width: 4px 0; color: #000; }
.style.current { border: 4px solid #c6c6c6; }
.sample { width: 60px; height: 29px; overflow: hidden; white-space: nowrap; text-align: left; }
.body { font-size: 13px; line-height: 30px; }
.h1 { font-size: 26px; font-weight: 600; line-height: 29px; }
.h2 { font-size: 20px; line-height: 30px; }
.heavy { font-weight: 600; }
.slant { font-style: italic; }
.grey { color: #555; }
.blue { color: #4472c4; }
.stylename { line-height: 21px; color: #555; white-space: nowrap; }
.scroller { display: flex; flex: 1; flex-direction: column; margin: -1px; border: 1px solid #ababab; }
.scroller button { display: flex; flex: 1; align-items: center; justify-content: center; border-top: 1px solid #ababab; }
.scroller .off { background: #e1e1e1; border-top: 0; }
.big { display: flex; flex-direction: column; align-items: center; line-height: 15px; }
.bigicon { display: flex; align-items: center; height: 29px; margin-bottom: 3px; }
.collapse { margin: auto 10px 5px auto; }

.quick { display: grid; flex: none; grid-template-columns: 63px 24px 12px 58px 50px 56px 52px 52px 52px 50px; height: 35px; align-items: center; padding-bottom: 2px; }
.quick .tool:first-child { padding-right: 14px; }

.workspace { display: flex; flex: 1; min-height: 0; }
.nav { flex: none; width: 253px; padding: 10px 18px 0 14px; margin-top: 2px; border-right: 1px solid #c6c6c6; }
.navhead { display: flex; align-items: flex-start; gap: 7px; height: 32px; margin-right: -6px; }
.navhead h2 { flex: 1; font-size: 20px; line-height: 30px; color: #2b579a; }
.navhead button { display: flex; align-items: center; height: 22px; }
.search { display: flex; align-items: center; gap: 7px; height: 24px; margin: 3px 0 0; padding: 0 4px 0 2px; border: 1px solid #ababab; background: #fff; }
.search input { flex: 1; min-width: 0; padding: 0; border: 0; }
.search input::placeholder { color: #777; }
.navtabs { display: flex; margin: 18px 0 33px; }
.navtabs button { padding: 0 12px; border-right: 1px solid #dedede; }
.navtabs button:first-child { padding-left: 0; }
.navtabs button:last-child { border: 0; }
.navtabs .active { color: #2b579a; font-weight: 700; }
.nav p { margin-bottom: 14px; line-height: 16px; margin-right: -4px; }

.left { display: flex; flex: none; flex-direction: column; width: 30px; }
.corner { display: flex; align-items: center; justify-content: center; width: 28px; height: 27px; border: 3px solid #d6d6d6; background: #fdfdfd; padding: 5px 0 0 3px; }
.vruler { display: flex; flex: 1; align-items: flex-end; width: 17px; margin: 17px 0 0 5px; background: linear-gradient(#c6c6c6 85px, #fff 85px); }

.canvas { display: flex; flex: 1; flex-direction: column; align-items: center; overflow: hidden; padding-right: 19px; }
.ruler { flex: none; height: 45px; }
.page { flex: none; width: 711px; padding: 64px 103px 0 107px; border: 1px solid #c6c6c6; background: #fff; color: #222; font-size: 14px; line-height: 37px; }
.marks { display: flex; justify-content: space-between; margin: 0 -18px 0 -21px; }
.marks i { width: 21px; height: 21px; border: solid #aaa; border-width: 0 1px 1px 0; }
.marks i:last-child { border-width: 0 0 1px 1px; }
.block { padding-bottom: 1px; }
.block p { height: 37px; white-space: nowrap; text-align: justify; text-align-last: justify; }
.block p:first-child { padding-left: 25px; }
.block .end { text-align-last: left; }
.tight { font-feature-settings: "halt"; }
.english { font-size: 13px; }
.block.english p { background: #c6c6c6; }
.block.english p:first-child { margin-left: 25px; padding-left: 0; }
.block.english p:last-child { width: 249px; padding: 0 11px 0 7px; }

.status { display: flex; flex: none; align-items: center; height: 22px; padding: 0 28px 2px 7px; border-top: 1px solid #c6c6c6; background: #f1f1f1; }
.status > span { margin-right: 21px; white-space: nowrap; }
.views { display: flex; align-self: stretch; margin: 0 0 -2px auto; }
.views button { display: flex; align-items: center; justify-content: center; width: 38px; }
.views .on { background: #c6c6c6; }
.zoombtn { margin: 0 3px; }
.zoom { appearance: none; width: 104px; height: 12px; margin: 0; background: linear-gradient(#999, #999) center / 100% 1px no-repeat, linear-gradient(#999, #999) center / 1px 5px no-repeat; }
.zoom::-webkit-slider-thumb { appearance: none; width: 4px; height: 11px; background: #555; }
.status > .percent { margin: 0 0 0 11px; }

.dialog { position: absolute; z-index: 3; left: 236px; top: 235px; display: flex; flex-direction: column; width: 413px; height: 755px; border: 1px solid #666; background: #f0f0f0; color: #000; box-shadow: 0 4px 16px rgba(0, 0, 0, .4); }
.dialog header { display: flex; align-items: center; height: 30px; background: #fff; padding: 0 17px 2px 8px; }
.dialog h2 { flex: 1; font-size: 12px; }
.dialog header button { margin-left: 37px; font-size: 14px; }
.dbody { display: flex; flex: 1; flex-direction: column; padding: 9px 8px 10px 6px; }
.dtabs { display: flex; align-items: flex-end; height: 27px; }
.dtabs button { height: 25px; padding: 1px 9px 0; border: 1px solid #dcdcdc; border-width: 1px 1px 0 0; white-space: nowrap; }
.dtabs .active { z-index: 1; height: 28px; margin: 0 0 -1px -1px; padding: 0 11px 1px 10px; border-left-width: 1px; background: #fff; }
.panel { display: flex; flex: 1; flex-direction: column; padding: 12px 6px 17px 8px; border: 1px solid #dcdcdc; background: #fff; }
fieldset { min-width: 0; margin: 0; padding: 0; border: 0; }
legend { display: flex; align-items: center; gap: 5px; width: 100%; margin-bottom: 6px; padding: 0; line-height: 18px; }
legend::after { content: ""; flex: 1; height: 1px; background: #dcdcdc; }
.check { display: flex; align-items: center; height: 25px; margin-left: 9px; }
.check input { position: relative; appearance: none; width: 13px; height: 13px; margin: 0 3px 0 0; border: 1px solid #333; background: #fff; }
.check input:checked::after { content: ""; position: absolute; left: 4px; top: 0; width: 4px; height: 8px; border: solid #333; border-width: 0 1px 1px 0; transform: rotate(42deg); }
.check span { padding: 1px; border: 1px dotted transparent; margin-left: -1px; }
.check .focus { border-color: #000; }
.spacing { margin-top: 19px; }
.align { display: flex; align-items: center; gap: 10px; margin: 2px 0 4px 9px; height: 28px; }
.drop { display: flex; width: 152px; height: 28px; border: 1px solid #ababab; }
.drop select { flex: 1; padding: 0 3px; border: 0; background: #fff; }
.drop i { display: flex; align-items: center; justify-content: center; width: 18px; border: 1px solid #ababab; border-width: 0 0 0 1px; background: #e1e1e1; }
.dbtn { height: 29px; min-width: 74px; padding: 0 7px; border: 1px solid #adadad; background: #e1e1e1; white-space: nowrap; }
.options { margin-left: 9px; }
.previewset { margin-top: auto; }
.previewset legend { margin-bottom: 8px; }
.previewbox { height: 170px; margin-left: 9px; padding: 7px 0 0 32px; border: 1px solid #666; font-size: 7px; line-height: 10px; }
.faint { width: 288px; color: #bbb; word-break: break-all; }
.mini { margin: -3px 0 3px; font-family: Lato, sans-serif; line-height: 15px; color: #333; white-space: nowrap; }
.mini p:first-child { padding-left: 14px; }
.actions { display: flex; margin: 12px -1px 0 0; }
.default { width: 94px; margin-left: 35px; }
.tabstop { width: 77px; }
.ok { margin: 0 10px 0 auto; border: 2px solid #0078d7; }

.overlay { position: absolute; z-index: 4; left: -1px; top: -1px; width: 100%; height: 100%; pointer-events: none; }
.pointer { filter: drop-shadow(2px 3px 2px rgba(0, 0, 0, .55)); }
.brand { position: absolute; right: 9px; bottom: 8px; display: flex; pointer-events: none; opacity: .85; }
.brand svg { margin-top: 1px; }
.brand div { display: flex; flex-direction: column; margin-left: -3px; }
.brand b { font-size: 21px; line-height: 26px; color: #4a8ad0; }
.brand span { font: 17px/18px "Liberation Sans", sans-serif; color: #62c07f; -webkit-text-stroke: 1px #62c07f; }
</style>
